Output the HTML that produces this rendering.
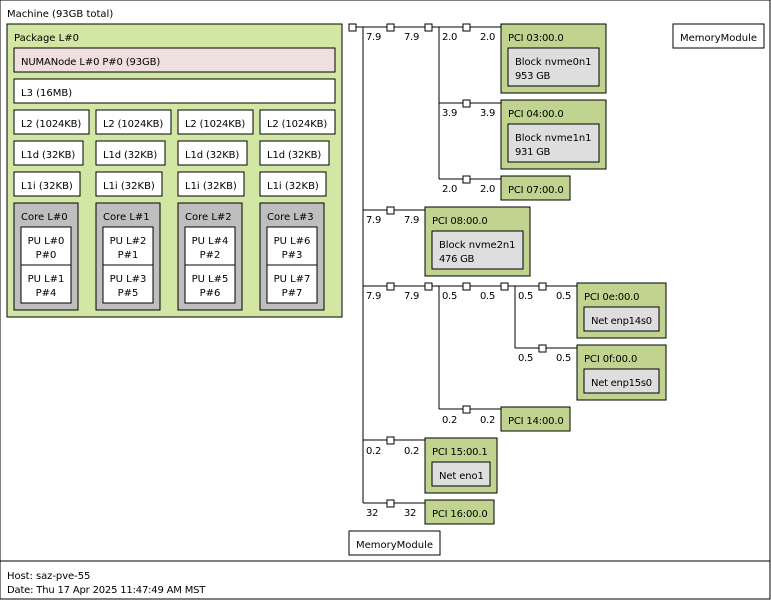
<!DOCTYPE html>
<html><head><meta charset="utf-8"><style>
html,body{margin:0;padding:0;background:#fff;width:771px;height:600px;overflow:hidden}
svg{display:block;position:absolute;left:0;top:0}
.t{position:absolute;margin-top:1px;font:10px/12px "DejaVu Sans",sans-serif;color:#000;white-space:pre;text-rendering:optimizeSpeed}
.c2{width:50px;text-align:center}
.n3{letter-spacing:-.3px}.pc{letter-spacing:-.18px}.bk{letter-spacing:-.08px}.gb{letter-spacing:-.3px}.ne{letter-spacing:-.27px}.l2{letter-spacing:-.15px}.ld{letter-spacing:-.12px}
rect,path{stroke:#000;stroke-width:1}
path{fill:none}
.w{fill:#fff}.p{fill:#d2e7a4}.n{fill:#efdfde}.c{fill:#bebebe}.g{fill:#c0d490}.b{fill:#dedede}
</style></head><body>
<svg width="771" height="600" viewBox="0 0 771 600" xmlns="http://www.w3.org/2000/svg">
<rect class="w" x="0" y="0" width="770" height="561"/>
<rect class="w" x="0" y="561" width="770" height="38"/>
<rect class="p" x="7" y="24" width="335" height="293"/>
<rect class="n" x="14" y="48" width="321" height="24"/>
<rect class="w" x="14" y="79" width="321" height="24"/>
<rect class="w" x="14" y="110" width="75" height="24"/>
<rect class="w" x="96" y="110" width="75" height="24"/>
<rect class="w" x="178" y="110" width="75" height="24"/>
<rect class="w" x="260" y="110" width="75" height="24"/>
<rect class="w" x="14" y="141" width="69" height="24"/>
<rect class="w" x="96" y="141" width="69" height="24"/>
<rect class="w" x="178" y="141" width="69" height="24"/>
<rect class="w" x="260" y="141" width="69" height="24"/>
<rect class="w" x="14" y="172" width="66" height="24"/>
<rect class="w" x="96" y="172" width="66" height="24"/>
<rect class="w" x="178" y="172" width="66" height="24"/>
<rect class="w" x="260" y="172" width="66" height="24"/>
<rect class="c" x="14" y="203" width="64" height="107"/>
<rect class="w" x="21" y="227" width="50" height="38"/>
<rect class="w" x="21" y="265" width="50" height="38"/>
<rect class="c" x="96" y="203" width="64" height="107"/>
<rect class="w" x="103" y="227" width="50" height="38"/>
<rect class="w" x="103" y="265" width="50" height="38"/>
<rect class="c" x="178" y="203" width="64" height="107"/>
<rect class="w" x="185" y="227" width="50" height="38"/>
<rect class="w" x="185" y="265" width="50" height="38"/>
<rect class="c" x="260" y="203" width="64" height="107"/>
<rect class="w" x="267" y="227" width="50" height="38"/>
<rect class="w" x="267" y="265" width="50" height="38"/>
<path d="M356 27H501M363 27V503M439 27V179M439 103H501M439 179H501M363 210H425M363 286H577M439 286V409M439 409H501M515 286V348M515 348H577M363 440H425M363 503H425"/>
<rect class="w" x="349" y="24" width="7" height="7"/>
<rect class="w" x="387" y="24" width="7" height="7"/>
<rect class="w" x="425" y="24" width="7" height="7"/>
<rect class="w" x="463" y="24" width="7" height="7"/>
<rect class="w" x="463" y="100" width="7" height="7"/>
<rect class="w" x="463" y="176" width="7" height="7"/>
<rect class="w" x="387" y="207" width="7" height="7"/>
<rect class="w" x="387" y="283" width="7" height="7"/>
<rect class="w" x="425" y="283" width="7" height="7"/>
<rect class="w" x="463" y="283" width="7" height="7"/>
<rect class="w" x="501" y="283" width="7" height="7"/>
<rect class="w" x="539" y="283" width="7" height="7"/>
<rect class="w" x="539" y="345" width="7" height="7"/>
<rect class="w" x="463" y="406" width="7" height="7"/>
<rect class="w" x="387" y="437" width="7" height="7"/>
<rect class="w" x="387" y="500" width="7" height="7"/>
<rect class="g" x="501" y="24" width="105" height="69"/>
<rect class="b" x="508" y="48" width="91" height="38"/>
<rect class="g" x="501" y="100" width="105" height="69"/>
<rect class="b" x="508" y="124" width="91" height="38"/>
<rect class="g" x="501" y="176" width="69" height="24"/>
<rect class="g" x="425" y="207" width="105" height="69"/>
<rect class="b" x="432" y="231" width="91" height="38"/>
<rect class="g" x="577" y="283" width="89" height="55"/>
<rect class="b" x="584" y="307" width="75" height="24"/>
<rect class="g" x="577" y="345" width="89" height="55"/>
<rect class="b" x="584" y="369" width="75" height="24"/>
<rect class="g" x="501" y="407" width="69" height="24"/>
<rect class="g" x="425" y="438" width="72" height="55"/>
<rect class="b" x="432" y="462" width="58" height="24"/>
<rect class="g" x="425" y="500" width="69" height="24"/>
<rect class="w" x="349" y="531" width="91" height="24"/>
<rect class="w" x="673" y="24" width="91" height="24"/>
</svg>
<div class="t" style="left:7px;top:8px">Machine (93GB total)</div>
<div class="t" style="left:7px;top:570px;letter-spacing:-.06px">Host: saz-pve-55</div>
<div class="t" style="left:7px;top:584px;letter-spacing:-.19px">Date: Thu 17 Apr 2025 11:47:49 AM MST</div>
<div class="t" style="left:14px;top:32px">Package L#0</div>
<div class="t" style="left:21px;top:56px;letter-spacing:-.13px">NUMANode L#0 P#0 (93GB)</div>
<div class="t" style="left:21px;top:87px">L3 (16MB)</div>
<div class="t l2" style="left:21px;top:118px">L2 (1024KB)</div>
<div class="t l2" style="left:103px;top:118px">L2 (1024KB)</div>
<div class="t l2" style="left:185px;top:118px">L2 (1024KB)</div>
<div class="t l2" style="left:267px;top:118px">L2 (1024KB)</div>
<div class="t ld" style="left:21px;top:149px">L1d (32KB)</div>
<div class="t ld" style="left:103px;top:149px">L1d (32KB)</div>
<div class="t ld" style="left:185px;top:149px">L1d (32KB)</div>
<div class="t ld" style="left:267px;top:149px">L1d (32KB)</div>
<div class="t" style="left:21px;top:180px">L1i (32KB)</div>
<div class="t" style="left:103px;top:180px">L1i (32KB)</div>
<div class="t" style="left:185px;top:180px">L1i (32KB)</div>
<div class="t" style="left:267px;top:180px">L1i (32KB)</div>
<div class="t" style="left:21px;top:211px">Core L#0</div>
<div class="t" style="left:103px;top:211px">Core L#1</div>
<div class="t" style="left:185px;top:211px">Core L#2</div>
<div class="t" style="left:267px;top:211px">Core L#3</div>
<div class="t c2" style="left:21px;top:235px">PU L#0</div><div class="t c2" style="left:21px;top:249px">P#0</div>
<div class="t c2" style="left:21px;top:273px">PU L#1</div><div class="t c2" style="left:21px;top:287px">P#4</div>
<div class="t c2" style="left:103px;top:235px">PU L#2</div><div class="t c2" style="left:103px;top:249px">P#1</div>
<div class="t c2" style="left:103px;top:273px">PU L#3</div><div class="t c2" style="left:103px;top:287px">P#5</div>
<div class="t c2" style="left:185px;top:235px">PU L#4</div><div class="t c2" style="left:185px;top:249px">P#2</div>
<div class="t c2" style="left:185px;top:273px">PU L#5</div><div class="t c2" style="left:185px;top:287px">P#6</div>
<div class="t c2" style="left:267px;top:235px">PU L#6</div><div class="t c2" style="left:267px;top:249px">P#3</div>
<div class="t c2" style="left:267px;top:273px">PU L#7</div><div class="t c2" style="left:267px;top:287px">P#7</div>
<div class="t n3" style="left:366px;top:31px">7.9</div><div class="t n3" style="left:404px;top:31px">7.9</div><div class="t n3" style="left:442px;top:31px">2.0</div><div class="t n3" style="left:480px;top:31px">2.0</div>
<div class="t n3" style="left:442px;top:107px">3.9</div><div class="t n3" style="left:480px;top:107px">3.9</div>
<div class="t n3" style="left:442px;top:183px">2.0</div><div class="t n3" style="left:480px;top:183px">2.0</div>
<div class="t n3" style="left:366px;top:214px">7.9</div><div class="t n3" style="left:404px;top:214px">7.9</div>
<div class="t n3" style="left:366px;top:290px">7.9</div><div class="t n3" style="left:404px;top:290px">7.9</div><div class="t n3" style="left:442px;top:290px">0.5</div><div class="t n3" style="left:480px;top:290px">0.5</div><div class="t n3" style="left:518px;top:290px">0.5</div><div class="t n3" style="left:556px;top:290px">0.5</div>
<div class="t n3" style="left:518px;top:352px">0.5</div><div class="t n3" style="left:556px;top:352px">0.5</div>
<div class="t n3" style="left:442px;top:414px">0.2</div><div class="t n3" style="left:480px;top:414px">0.2</div>
<div class="t n3" style="left:366px;top:445px">0.2</div><div class="t n3" style="left:404px;top:445px">0.2</div>
<div class="t n3" style="left:366px;top:507px">32</div><div class="t n3" style="left:404px;top:507px">32</div>
<div class="t pc" style="left:508px;top:32px">PCI 03:00.0</div>
<div class="t bk" style="left:515px;top:56px">Block nvme0n1</div><div class="t gb" style="left:515px;top:70px">953 GB</div>
<div class="t pc" style="left:508px;top:108px">PCI 04:00.0</div>
<div class="t bk" style="left:515px;top:132px">Block nvme1n1</div><div class="t gb" style="left:515px;top:146px">931 GB</div>
<div class="t pc" style="left:508px;top:184px">PCI 07:00.0</div>
<div class="t pc" style="left:432px;top:215px">PCI 08:00.0</div>
<div class="t bk" style="left:439px;top:239px">Block nvme2n1</div><div class="t gb" style="left:439px;top:253px">476 GB</div>
<div class="t pc" style="left:584px;top:291px">PCI 0e:00.0</div>
<div class="t ne" style="left:591px;top:315px">Net enp14s0</div>
<div class="t" style="left:584px;top:353px;letter-spacing:-.1px">PCI 0f:00.0</div>
<div class="t ne" style="left:591px;top:377px">Net enp15s0</div>
<div class="t pc" style="left:508px;top:415px">PCI 14:00.0</div>
<div class="t pc" style="left:432px;top:446px">PCI 15:00.1</div>
<div class="t" style="left:439px;top:470px;letter-spacing:-.12px">Net eno1</div>
<div class="t pc" style="left:432px;top:508px">PCI 16:00.0</div>
<div class="t" style="left:356px;top:539px">MemoryModule</div>
<div class="t" style="left:680px;top:32px">MemoryModule</div>
</body></html>
